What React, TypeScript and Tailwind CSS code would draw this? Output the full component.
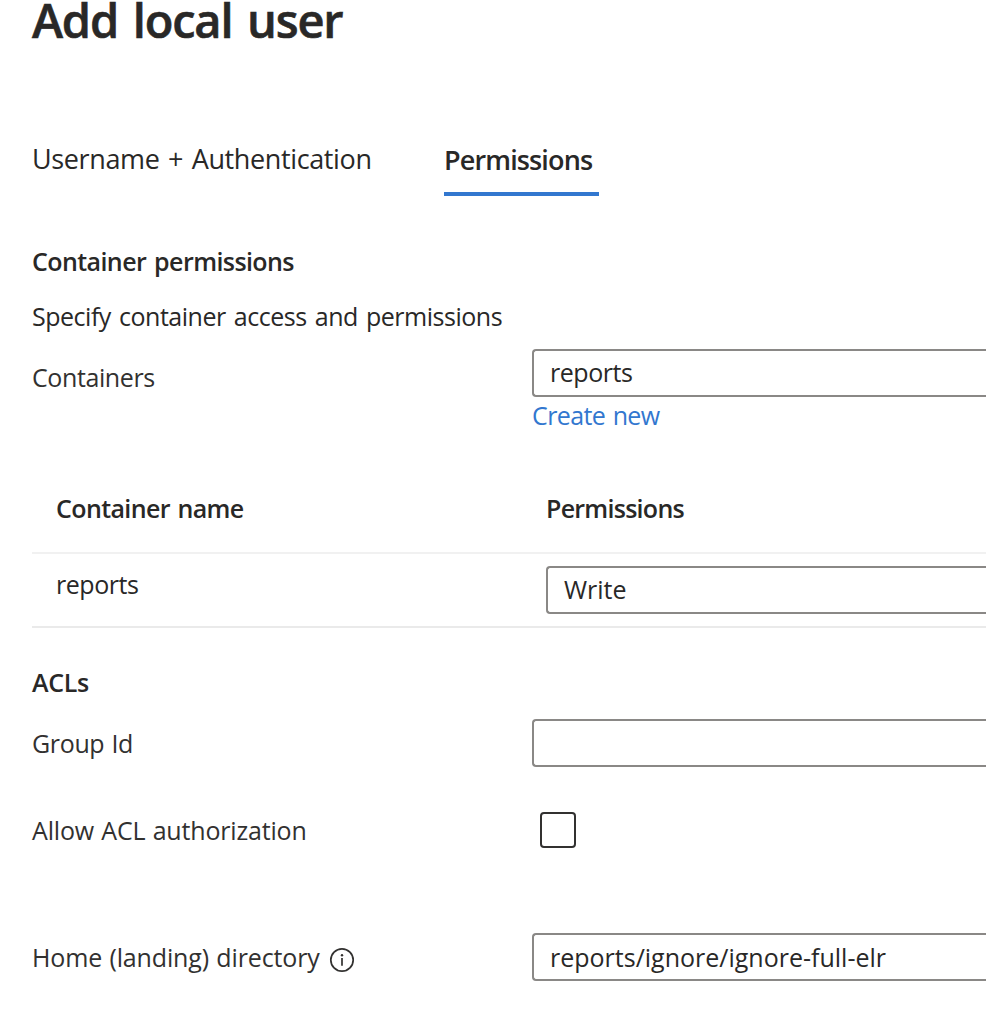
import type { ReactNode } from "react";

function Field({ className = "", children }: { className?: string; children?: ReactNode }) {
  return (
    <div
      className={`flex h-12 flex-1 items-center rounded-l border-2 border-r-0 border-[#8a8886] px-4 text-[#292827] ${className}`}
    >
      {children}
    </div>
  );
}

function Label({ className = "", children }: { className?: string; children: ReactNode }) {
  return (
    <div className={`flex w-[500px] shrink-0 items-center text-[#323130] ${className}`}>{children}</div>
  );
}

function InfoIcon() {
  return (
    <svg className="ml-[9.5px] mt-[6px] size-[26px]" viewBox="0 0 26 26" fill="none">
      <circle cx="13" cy="13" r="11.2" stroke="#323130" strokeWidth="1.7" />
      <circle cx="13" cy="8.2" r="1.2" fill="#323130" />
      <path d="M13 11v7.8" stroke="#323130" strokeWidth="1.7" />
    </svg>
  );
}

export default function App() {
  return (
    <div className="h-[1034px] overflow-hidden bg-white pl-8 font-['Open_Sans',sans-serif] text-[25px] leading-9 whitespace-nowrap text-[#292827]">
      <h1 className="-mt-3 h-16 text-[47px] leading-[64px] font-semibold tracking-[-1.2px] [word-spacing:3.8px] [-webkit-text-stroke:0.6px_#292827]">
        Add local user
      </h1>

      <div className="mt-[87px] flex h-[57px] items-start text-[27px] leading-10">
        <div className="w-[412px] tracking-[-0.38px] [word-spacing:2px]">Username + Authentication</div>
        <div className="h-full w-[155px] border-b-4 border-[#3277cf] pt-px font-semibold tracking-[-0.86px]">
          Permissions
        </div>
      </div>

      <h2 className="mt-[47px] font-semibold tracking-[-0.58px] [word-spacing:2px]">
        Container permissions
      </h2>
      <p className="mt-[19px] tracking-[-0.48px] [word-spacing:2.1px]">
        Specify container access and permissions
      </p>

      <div className="mt-[15px] flex items-start">
        <Label className="mt-[10px] tracking-[-0.4px]">Containers</Label>
        <div className="flex flex-1 flex-col">
          <Field className="flex-none pb-[2px] tracking-[-0.45px]">reports</Field>
          <a className="tracking-[-0.6px] text-[#3277cf] [word-spacing:1.5px]">Create new</a>
        </div>
      </div>

      <div className="mt-[57px]">
        <div className="flex h-16 items-start border-b-2 border-[#f1f1f1] pl-6 font-semibold">
          <div className="w-[490px] tracking-[-0.6px] [word-spacing:1.5px]">Container name</div>
          <div className="tracking-[-0.73px]">Permissions</div>
        </div>
        <div className="flex h-[74px] items-start border-b-2 border-[#eaeaea] pt-3 pl-6">
          <div className="w-[490px] tracking-[-0.45px]">reports</div>
          <Field className="pb-[2px]">Write</Field>
        </div>
      </div>

      <h2 className="mt-9 font-semibold tracking-[-0.3px]">ACLs</h2>

      <div className="mt-[19px] flex items-start">
        <Label className="mt-[6px] tracking-[-0.35px] [word-spacing:1px]">Group Id</Label>
        <Field />
      </div>

      <div className="mt-[45px] flex items-start">
        <Label className="tracking-[-0.18px] [word-spacing:1px]">Allow ACL authorization</Label>
        <div className="ml-2 size-9 rounded border-2 border-[#323130]" />
      </div>

      <div className="mt-[85px] flex items-start">
        <Label className="mt-[6px] h-9 tracking-[-0.14px] [word-spacing:1px]">
          Home (landing) directory
          <InfoIcon />
        </Label>
        <Field>reports/ignore/ignore-full-elr</Field>
      </div>
    </div>
  );
}
